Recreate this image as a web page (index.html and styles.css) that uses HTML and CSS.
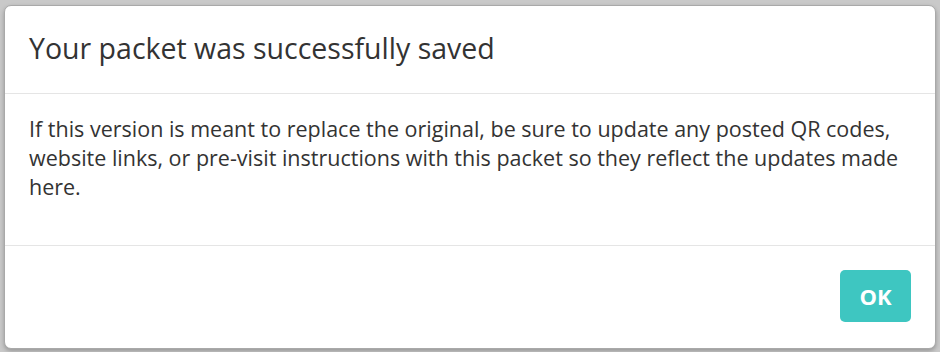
FILE: index.html
```html
<!DOCTYPE html>
<html>
<head>
<meta charset="utf-8">
<link rel="stylesheet" href="styles.css">
</head>
<body>
<div class="backdrop">
  <div class="modal">
    <div class="modal-header">
      <h4 class="modal-title">Your packet was successfully saved</h4>
    </div>
    <div class="modal-body">
      <p>If this version is meant to replace the original, be sure to update any posted QR codes, website links, or pre-visit instructions with this packet so they reflect the updates made here.</p>
    </div>
    <div class="modal-footer">
      <button class="btn-ok">OK</button>
    </div>
  </div>
</div>
</body>
</html>
```

FILE: styles.css
```css
html, body {
  margin: 0;
  padding: 0;
  width: 940px;
  height: 352px;
  overflow: hidden;
}
body {
  font-family: "Open Sans", "Noto Sans", sans-serif;
  background: #c9c9c9;
}
.backdrop {
  box-sizing: border-box;
  width: 940px;
  height: 352px;
  padding: 5px 4px 3px 4px;
  background: #c9c9c9;
}
.modal {
  box-sizing: border-box;
  width: 932px;
  height: 344px;
  background: #fff;
  border: 1px solid #a9a9a9;
  border-radius: 7px;
  box-shadow: 0 2px 4px rgba(0,0,0,0.25);
  display: flex;
  flex-direction: column;
}
.modal-header {
  height: 88px;
  box-sizing: border-box;
  padding: 0 24px;
  display: flex;
  align-items: center;
  border-bottom: 1px solid #e5e5e5;
}
.modal-title {
  margin: 0;
  font-size: 28.5px;
  font-weight: 400;
  color: #333;
  line-height: 1.2;
  padding-bottom: 2px;
}
.modal-body {
  height: 152px;
  box-sizing: border-box;
  padding: 20px 24px 0 24px;
  border-bottom: 1px solid #e5e5e5;
}
.modal-body p {
  margin: 0;
  font-size: 21.5px;
  line-height: 29px;
  color: #333;
}
.modal-footer {
  flex: 1;
  display: flex;
  justify-content: flex-end;
  align-items: flex-start;
  padding: 24px 24px 0 0;
}
.btn-ok {
  width: 71px;
  height: 52px;
  border: none;
  border-radius: 5px;
  background: #3ec6c1;
  color: #fff;
  font-family: "Open Sans", "Noto Sans", sans-serif;
  font-weight: 700;
  font-size: 22px;
  padding: 0;
  cursor: pointer;
}
```
